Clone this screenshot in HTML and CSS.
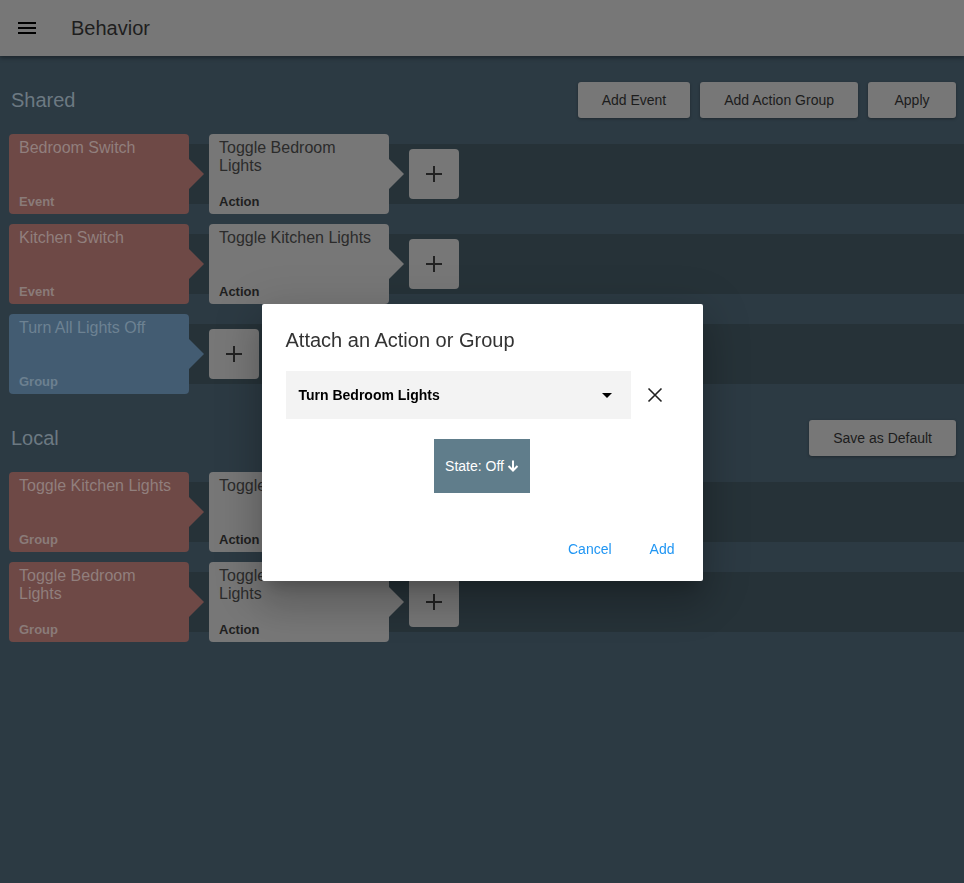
FILE: index.html
```html
<!DOCTYPE html>
<html>
<head>
<meta charset="utf-8">
<title>Behavior</title>
<link rel="stylesheet" href="styles.css">
</head>
<body>
<header class="appbar">
  <svg class="menu-icon" width="24" height="24" viewBox="0 0 24 24"><path d="M3 18h18v-2H3v2zm0-5h18v-2H3v2zm0-7v2h18V6H3z" fill="#000"/></svg>
  <h1 class="appbar-title">Behavior</h1>
</header>

<main class="content">
  <section class="section">
    <div class="section-head">
      <h2 class="section-title">Shared</h2>
      <div class="section-actions">
        <button class="btn">Add Event</button>
        <button class="btn">Add Action Group</button>
        <button class="btn">Apply</button>
      </div>
    </div>
    <div class="rows">
      <div class="row">
        <div class="card card-red"><span class="card-title">Bedroom Switch</span><span class="card-label">Event</span></div>
        <span class="arrow arrow-red"></span>
        <div class="card card-gray"><span class="card-title">Toggle Bedroom Lights</span><span class="card-label">Action</span></div>
        <span class="arrow arrow-gray"></span>
        <button class="plus"><svg width="18" height="18" viewBox="0 0 18 18"><path d="M9 1v16M1 9h16" stroke="#222" stroke-width="2"/></svg></button>
      </div>
      <div class="row">
        <div class="card card-red"><span class="card-title">Kitchen Switch</span><span class="card-label">Event</span></div>
        <span class="arrow arrow-red"></span>
        <div class="card card-gray"><span class="card-title">Toggle Kitchen Lights</span><span class="card-label">Action</span></div>
        <span class="arrow arrow-gray"></span>
        <button class="plus"><svg width="18" height="18" viewBox="0 0 18 18"><path d="M9 1v16M1 9h16" stroke="#222" stroke-width="2"/></svg></button>
      </div>
      <div class="row">
        <div class="card card-blue"><span class="card-title">Turn All Lights Off</span><span class="card-label">Group</span></div>
        <span class="arrow arrow-blue"></span>
        <button class="plus"><svg width="18" height="18" viewBox="0 0 18 18"><path d="M9 1v16M1 9h16" stroke="#222" stroke-width="2"/></svg></button>
      </div>
    </div>
  </section>

  <section class="section">
    <div class="section-head">
      <h2 class="section-title">Local</h2>
      <div class="section-actions">
        <button class="btn">Save as Default</button>
      </div>
    </div>
    <div class="rows">
      <div class="row">
        <div class="card card-red"><span class="card-title">Toggle Kitchen Lights</span><span class="card-label">Group</span></div>
        <span class="arrow arrow-red"></span>
        <div class="card card-gray"><span class="card-title">Toggle Kitchen Lights</span><span class="card-label">Action</span></div>
        <span class="arrow arrow-gray"></span>
        <button class="plus"><svg width="18" height="18" viewBox="0 0 18 18"><path d="M9 1v16M1 9h16" stroke="#222" stroke-width="2"/></svg></button>
      </div>
      <div class="row">
        <div class="card card-red"><span class="card-title">Toggle Bedroom Lights</span><span class="card-label">Group</span></div>
        <span class="arrow arrow-red"></span>
        <div class="card card-gray"><span class="card-title">Toggle Bedroom Lights</span><span class="card-label">Action</span></div>
        <span class="arrow arrow-gray"></span>
        <button class="plus"><svg width="18" height="18" viewBox="0 0 18 18"><path d="M9 1v16M1 9h16" stroke="#222" stroke-width="2"/></svg></button>
      </div>
    </div>
  </section>
</main>

<div class="overlay">
  <div class="dialog">
    <h3 class="dialog-title">Attach an Action or Group</h3>
    <div class="select-row">
      <div class="select">
        <span class="select-value">Turn Bedroom Lights</span>
        <svg width="10" height="5" viewBox="0 0 10 5"><path d="M0 0l5 5 5-5z" fill="#000"/></svg>
      </div>
      <button class="icon-btn"><svg width="24" height="24" viewBox="0 0 24 24"><path d="M5.5 5.5l13 13M18.5 5.5l-13 13" stroke="#222" stroke-width="1.6"/></svg></button>
    </div>
    <div class="state-wrap">
      <button class="state-btn">State: Off <svg width="12" height="12" viewBox="0 0 12 12"><path d="M6 0.5v10M1.5 6L6 10.5 10.5 6" stroke="#fff" stroke-width="2" fill="none"/></svg></button>
    </div>
    <div class="dialog-actions">
      <button class="text-btn">Cancel</button>
      <button class="text-btn">Add</button>
    </div>
  </div>
</div>
</body>
</html>
```

FILE: styles.css
```css
* { box-sizing: border-box; }
html, body { margin: 0; padding: 0; }
body {
  background: #2c3a43;
  font-family: "Liberation Sans", Arial, sans-serif;
  min-height: 883px;
}
button { font-family: inherit; border: none; cursor: pointer; }

.appbar {
  height: 56px;
  background: #777777;
  display: flex;
  align-items: center;
  padding-left: 15px;
  box-shadow: 0 2px 4px rgba(0,0,0,0.35);
  position: relative;
  z-index: 1;
}
.menu-icon { display: block; }
.appbar-title {
  margin: 0 0 0 32px;
  font-size: 20px;
  font-weight: normal;
  color: #1e1e1e;
}

.content { padding: 0 0 0 9px; }
.section { padding-top: 26px; }
.section-head {
  display: flex;
  align-items: center;
  justify-content: space-between;
  height: 36px;
  padding-right: 8px;
  margin-bottom: 16px;
}
.section-title {
  margin: 0 0 0 2px;
  font-size: 20px;
  font-weight: normal;
  color: #6c7982;
}
.section-actions { display: flex; gap: 10px; }
.btn {
  height: 36px;
  min-width: 88px;
  background: #777777;
  border-radius: 3px;
  padding: 0 24px;
  font-size: 14px;
  color: #1c1c1c;
  box-shadow: 0 1px 3px rgba(0,0,0,0.3);
}

.rows { display: flex; flex-direction: column; gap: 10px; }
.row {
  height: 80px;
  display: flex;
  align-items: center;
  background: linear-gradient(to bottom, transparent 10px, #263238 10px, #263238 70px, transparent 70px);
}
.card {
  width: 180px;
  height: 80px;
  border-radius: 4px;
  padding: 5px 9px 5px 10px;
  display: flex;
  flex-direction: column;
  justify-content: space-between;
  flex: none;
}
.card-title { font-size: 16px; line-height: 18px; }
.card-label { font-size: 13px; line-height: 15px; font-weight: bold; }
.card-red { background: #6e4946; }
.card-red .card-title { color: #917f7d; }
.card-red .card-label { color: #8a7b79; }
.card-gray { background: #777777; }
.card-gray .card-title { color: #2b2b2b; }
.card-gray .card-label { color: #1f1f1f; }
.card-blue { background: #435c72; }
.card-blue .card-title { color: #6d8292; }
.card-blue .card-label { color: #6c8090; }

.arrow {
  width: 0;
  height: 0;
  border-top: 15px solid transparent;
  border-bottom: 15px solid transparent;
  border-left: 15px solid;
  margin-right: 5px;
  flex: none;
}
.arrow-red { border-left-color: #6e4946; }
.arrow-gray { border-left-color: #777777; }
.arrow-blue { border-left-color: #435c72; }

.plus {
  width: 50px;
  height: 50px;
  background: #777777;
  border-radius: 4px;
  display: flex;
  align-items: center;
  justify-content: center;
  padding: 0;
  flex: none;
}
.plus svg { display: block; }

.overlay {
  position: fixed;
  inset: 0;
  padding-top: 2px;
  display: flex;
  align-items: center;
  justify-content: center;
  z-index: 10;
}
.dialog {
  width: 441px;
  height: 277px;
  background: #ffffff;
  border-radius: 2px;
  padding: 24px 16px 14px 24px;
  box-shadow: 0 11px 15px -7px rgba(0,0,0,0.2), 0 24px 38px 3px rgba(0,0,0,0.14), 0 9px 46px 8px rgba(0,0,0,0.12);
  display: flex;
  flex-direction: column;
}
.dialog-title {
  margin: 0;
  font-size: 20px;
  line-height: 24px;
  font-weight: normal;
  color: #333333;
}
.select-row {
  display: flex;
  align-items: center;
  margin-top: 19px;
  padding-right: 8px;
}
.select {
  flex: 1;
  height: 48px;
  background: #f3f3f3;
  display: flex;
  align-items: center;
  justify-content: space-between;
  padding: 0 19px 0 13px;
}
.select-value { font-size: 14px; font-weight: bold; color: #000; }
.select svg { display: block; }
.icon-btn {
  width: 48px;
  height: 48px;
  background: transparent;
  padding: 0;
  display: flex;
  align-items: center;
  justify-content: center;
}
.state-wrap {
  display: flex;
  justify-content: center;
  margin-top: 20px;
  padding-right: 8px;
}
.state-btn {
  height: 54px;
  width: 96px;
  background: #607d8b;
  color: #ffffff;
  font-size: 14px;
  display: flex;
  align-items: center;
  justify-content: center;
  gap: 3px;
  padding: 0;
}
.state-btn svg { display: block; }
.dialog-actions {
  margin-top: auto;
  display: flex;
  justify-content: flex-end;
  gap: 14px;
}
.text-btn {
  height: 36px;
  padding: 0 12px;
  background: transparent;
  color: #2196f3;
  font-size: 14px;
}
```
